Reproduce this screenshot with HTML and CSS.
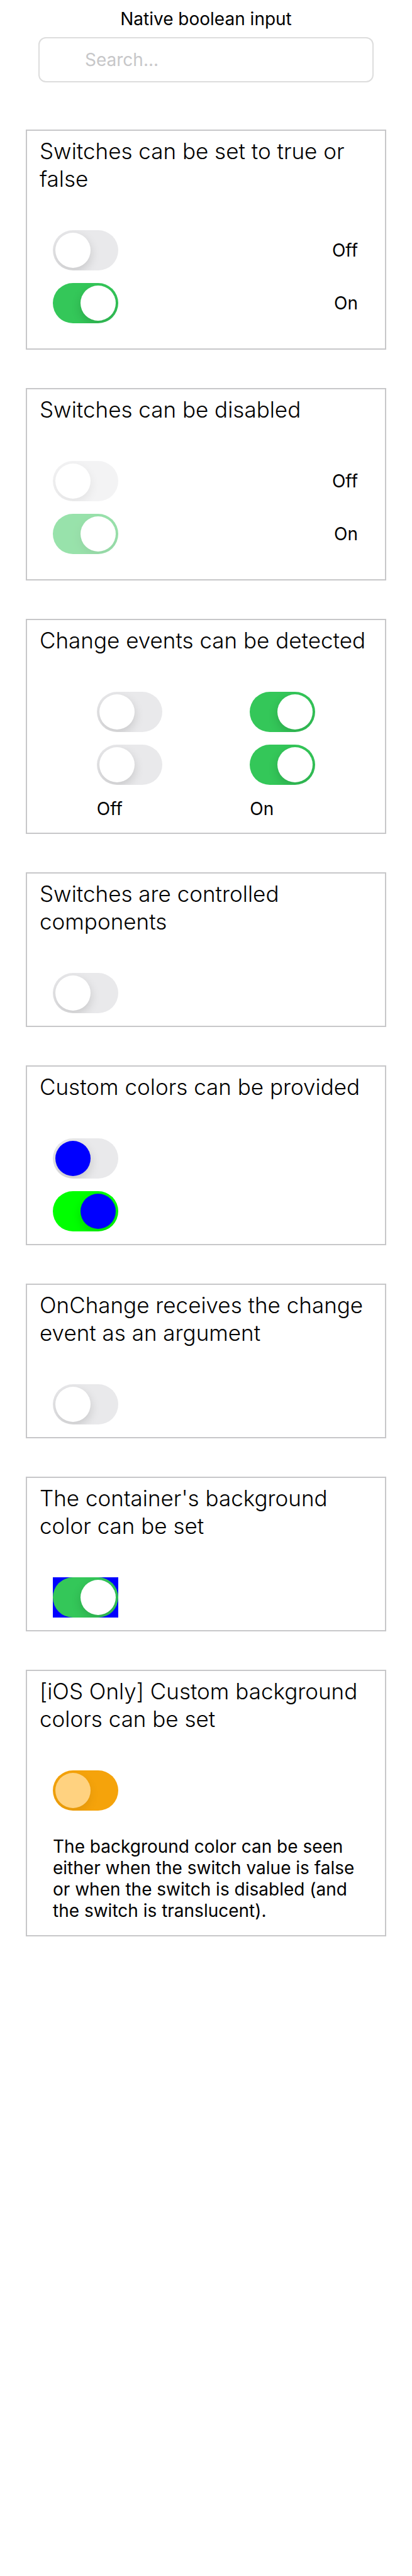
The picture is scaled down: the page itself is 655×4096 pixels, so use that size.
FILE: index.html
```html
<!DOCTYPE html>
<html lang="en">
<head>
<meta charset="utf-8">
<meta name="viewport" content="width=device-width, initial-scale=1">
<title>Switch</title>
<link rel="stylesheet" href="styles.css">
</head>
<body>
<header class="header">
  <h1 class="page-title">Native boolean input</h1>
  <input class="search" type="search" placeholder="Search..." aria-label="Search">
</header>
<main class="examples">
  <section class="card card-rows">
    <h2 class="card-title">Switches can be set to true or false</h2>
    <div class="card-body">
      <div class="row"><input class="switch" type="checkbox" role="switch" id="basic-off"><label for="basic-off">Off</label></div>
      <div class="row"><input class="switch" type="checkbox" role="switch" id="basic-on" checked><label for="basic-on">On</label></div>
    </div>
  </section>
  <section class="card card-rows">
    <h2 class="card-title">Switches can be disabled</h2>
    <div class="card-body">
      <div class="row"><input class="switch" type="checkbox" role="switch" id="disabled-off" disabled><label for="disabled-off">Off</label></div>
      <div class="row"><input class="switch" type="checkbox" role="switch" id="disabled-on" disabled checked><label for="disabled-on">On</label></div>
    </div>
  </section>
  <section class="card">
    <h2 class="card-title">Change events can be detected</h2>
    <div class="card-body columns">
      <div class="column">
        <input class="switch" type="checkbox" role="switch" aria-label="First, off">
        <input class="switch" type="checkbox" role="switch" id="event-off">
        <label class="column-label" for="event-off">Off</label>
      </div>
      <div class="column">
        <input class="switch" type="checkbox" role="switch" aria-label="First, on" checked>
        <input class="switch" type="checkbox" role="switch" id="event-on" checked>
        <label class="column-label" for="event-on">On</label>
      </div>
    </div>
  </section>
  <section class="card">
    <h2 class="card-title">Switches are controlled components</h2>
    <div class="card-body">
      <input class="switch" type="checkbox" role="switch" aria-label="Controlled switch">
    </div>
  </section>
  <section class="card">
    <h2 class="card-title">Custom colors can be provided</h2>
    <div class="card-body">
      <input class="switch switch-custom" type="checkbox" role="switch" aria-label="Custom colors, off">
      <input class="switch switch-custom" type="checkbox" role="switch" aria-label="Custom colors, on" checked>
    </div>
  </section>
  <section class="card">
    <h2 class="card-title">OnChange receives the change event as an argument</h2>
    <div class="card-body">
      <input class="switch" type="checkbox" role="switch" aria-label="OnChange switch">
    </div>
  </section>
  <section class="card">
    <h2 class="card-title">The container's background color can be set</h2>
    <div class="card-body">
      <span class="switch-container"><input class="switch" type="checkbox" role="switch" aria-label="Switch in a blue container" checked></span>
    </div>
  </section>
  <section class="card">
    <h2 class="card-title">[iOS Only] Custom background colors can be set</h2>
    <div class="card-body">
      <input class="switch switch-orange" type="checkbox" role="switch" aria-label="Orange background switch">
      <p class="note">The background color can be seen either when the switch value is false or when the switch is disabled (and the switch is translucent).</p>
    </div>
  </section>
</main>
</body>
</html>
```
FILE: styles.css
```css
* {
  box-sizing: border-box;
}

body {
  margin: 0;
  background: #fff;
  color: #000;
  font-family: Inter, "Liberation Sans", sans-serif;
  font-size: 28px;
  line-height: 34px;
}

.header {
  display: flex;
  flex-direction: column;
  gap: 12px;
  padding: 13px 61px 0;
}

.page-title {
  margin: 0;
  font-size: 28px;
  font-weight: 400;
  text-align: center;
}

.search {
  appearance: none;
  width: 100%;
  height: 72px;
  margin: 0;
  padding: 0 72px;
  border: 2px solid #ddd;
  border-radius: 12px;
  background: #fff;
  font: inherit;
}

.search::placeholder {
  color: #c7c7c9;
  opacity: 1;
}

.examples {
  display: flex;
  flex-direction: column;
  gap: 61px;
  padding: 75px 41px 61px;
}

.card {
  padding: 10px 0 20px;
  border: 2px solid #c7c7c9;
}

.card-rows {
  padding-bottom: 40px;
}

.card-title {
  margin: 0;
  padding: 0 20px;
  font-size: 35px;
  font-weight: 300;
  line-height: 44px;
}

.card-body {
  display: flex;
  flex-direction: column;
  align-items: flex-start;
  gap: 20px;
  padding: 60px 41px 0;
}

.row {
  display: flex;
  align-items: center;
  justify-content: space-between;
  width: 100%;
  padding-right: 2px;
}

.columns {
  flex-direction: row;
  justify-content: space-around;
  gap: 0;
}

.column {
  display: flex;
  flex-direction: column;
  gap: 20px;
}

.column-label {
  line-height: 36px;
}

.switch {
  appearance: none;
  flex: none;
  display: block;
  width: 104px;
  height: 64px;
  margin: 0;
  padding: 4px;
  border-radius: 32px;
  background: #e9e9eb;
  overflow: hidden;
}

.switch::before {
  content: "";
  display: block;
  width: 56px;
  height: 56px;
  border-radius: 50%;
  background: #fff;
  box-shadow: 0 6px 16px rgba(0, 0, 0, 0.15);
}

.switch:checked {
  background: #34c759;
}

.switch:checked::before {
  margin-left: auto;
}

.switch:disabled {
  opacity: 0.5;
}

.switch-custom::before {
  background: #00f;
}

.switch-custom:checked {
  background: #0f0;
}

.switch-container {
  background: #00f;
}

.switch-orange {
  background: #f5a30b;
}

.switch-orange::before {
  background: #ffd280;
  box-shadow: 0 6px 16px rgba(0, 0, 0, 0.08);
}

.note {
  margin: 0;
  padding: 20px 0 2px;
}
```
